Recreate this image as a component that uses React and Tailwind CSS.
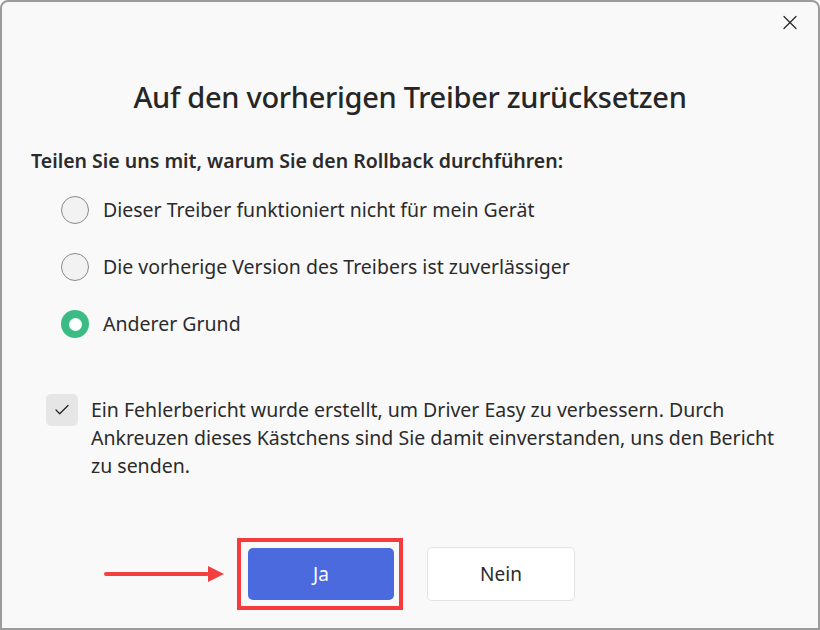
import React, { useState } from 'react';
import { X, Check } from 'lucide-react';

const reasons = [
  'Dieser Treiber funktioniert nicht für mein Gerät',
  'Die vorherige Version des Treibers ist zuverlässiger',
  'Anderer Grund',
];

const App = () => {
  const [selected, setSelected] = useState(2);
  const [agreed, setAgreed] = useState(true);

  return (
    <div className="w-[820px] h-[630px] bg-white" style={{ fontFamily: '"Noto Sans", "Open Sans", sans-serif' }}>
      <div className="w-full h-full flex flex-col bg-[#f9f9f9] border-2 border-[#9c9c9c] rounded-t-[8px] text-[#262626]">
        {/* Close */}
        <div className="flex justify-end pt-[8px] pr-[16px]">
          <button className="w-6 h-6 flex items-center justify-center text-[#2b2b2b]">
            <X size={25} strokeWidth={1.3} />
          </button>
        </div>

        {/* Title */}
        <h1 className="mt-[45px] text-center text-[29px] leading-[36px] font-medium tracking-[-0.3px] text-[#262626]">
          Auf den vorherigen Treiber zurücksetzen
        </h1>

        {/* Question */}
        <p className="mt-[33px] ml-[29px] text-[19.5px] leading-[26px] font-semibold text-[#2b2b2b]">
          Teilen Sie uns mit, warum Sie den Rollback durchführen:
        </p>

        <div className="mt-[22px] ml-[59px] flex flex-col gap-[29px]">
          {reasons.map((r, i) => (
            <label key={r} className="flex items-center gap-[14px] cursor-pointer" onClick={() => setSelected(i)}>
              {selected === i ? (
                <span className="w-[28px] h-[28px] rounded-full bg-[#3dbb84] flex items-center justify-center">
                  <span className="w-[13px] h-[13px] rounded-full bg-white" />
                </span>
              ) : (
                <span className="w-[28px] h-[28px] rounded-full border-[1.5px] border-[#8a8a8a] bg-[#f2f2f2]" />
              )}
              <span className="text-[19.5px] leading-[28px] text-[#2b2b2b]">{r}</span>
            </label>
          ))}
        </div>

        {/* Agreement */}
        <div className="mt-[58px] ml-[44px] flex items-start gap-[13px]">
          <button
            onClick={() => setAgreed(!agreed)}
            className="mt-[-2px] w-[32px] h-[32px] shrink-0 rounded-[5px] bg-[#e6e6e6] flex items-center justify-center text-[#1f1f1f]"
          >
            {agreed && <Check size={18} strokeWidth={1.6} />}
          </button>
          <p className="text-[19.5px] leading-[28px] text-[#2b2b2b] whitespace-nowrap">
            Ein Fehlerbericht wurde erstellt, um Driver Easy zu verbessern. Durch
            <br />
            Ankreuzen dieses Kästchens sind Sie damit einverstanden, uns den Bericht
            <br />
            zu senden.
          </p>
        </div>

        {/* Buttons */}
        <div className="mt-[58px] flex items-center">
          <div className="ml-[102px] w-[120px] flex items-center">
            <div className="h-[4px] flex-1 bg-[#f23f3f] rounded-full" />
            <svg width="16" height="16" viewBox="0 0 16 16" className="-ml-[1px]">
              <polygon points="0,0 16,8 0,16" fill="#f23f3f" />
            </svg>
          </div>
          <div className="ml-[13px] border-[4px] border-[#f53b3b] pt-[6px] pb-[6px] pl-[7px] pr-[5px]">
            <button className="w-[146px] h-[52px] rounded-[5px] bg-[#4a6ade] text-white text-[19px]">Ja</button>
          </div>
          <button className="ml-[24px] w-[148px] h-[54px] rounded-[5px] bg-white border border-[#e3e3e3] text-[19px] text-[#2b2b2b]">
            Nein
          </button>
        </div>
      </div>
    </div>
  );
};

export default App;
